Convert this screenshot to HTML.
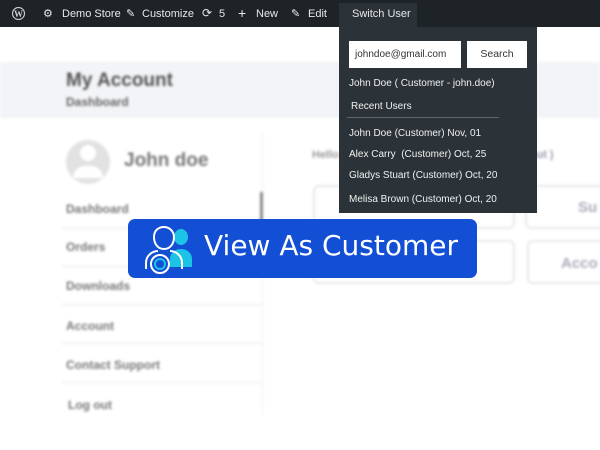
<!DOCTYPE html>
<html><head><style>
*{margin:0;padding:0;box-sizing:border-box}
body{width:600px;height:450px;overflow:hidden;background:#fff;font-family:"Liberation Sans",sans-serif;position:relative}
.bar{position:absolute;left:0;top:0;width:600px;height:27px;background:#1d2327;color:#e8e8e8;font-size:11px}
.bar span{position:absolute;top:8px;white-space:nowrap}
.blur{filter:blur(1.3px)}
.bg{position:absolute;left:0;top:0;width:600px;height:450px}
.hd{position:absolute;left:0;top:62px;width:600px;height:56px;background:#f3f4f7}
.t{position:absolute;color:#555;font-weight:bold;white-space:nowrap}
.sep{position:absolute;left:62px;width:200px;height:1px;background:#e6e6e6}
.box{position:absolute;border:2px solid #e8e8ee;border-radius:6px}
.dd{position:absolute;left:339px;top:27px;width:198px;height:186px;background:#2c3338;color:#f0f0f0;font-size:10px}
.dd div{position:absolute;white-space:nowrap}
.btn{position:absolute;left:128px;top:219px;width:349px;height:59px;background:#134fd5;border-radius:7px;color:#fff;font-size:28px;font-family:"DejaVu Sans",sans-serif}
</style></head><body>
<div class="bg blur">
 <div class="hd"></div>
 <div class="t" style="left:66px;top:70px;font-size:19px;color:#555">My Account</div>
 <div class="t" style="left:66px;top:95px;font-size:12px;color:#666">Dashboard</div>
 <div style="position:absolute;left:66px;top:140px;width:44px;height:44px;border-radius:50%;background:#e2e2e2"></div>
 <div style="position:absolute;left:80px;top:145px;width:16px;height:16px;border-radius:50%;background:#fff"></div>
 <div style="position:absolute;left:73px;top:166px;width:30px;height:12px;border-radius:12px 12px 0 0;background:#fff"></div>
 <div class="t" style="left:124px;top:150px;font-size:19px;color:#777">John doe</div>
 <div style="position:absolute;left:262px;top:132px;width:1px;height:283px;background:#eee"></div>
 <div style="position:absolute;left:260px;top:192px;width:3px;height:30px;background:#888"></div>
 <div class="t" style="left:66px;top:202px;font-size:12px;color:#777">Dashboard</div>
 <div class="sep" style="top:228px"></div>
 <div class="t" style="left:66px;top:240px;font-size:12px;color:#777">Orders</div>
 <div class="sep" style="top:266px"></div>
 <div class="t" style="left:66px;top:279px;font-size:12px;color:#777">Downloads</div>
 <div class="sep" style="top:304px"></div>
 <div class="t" style="left:66px;top:319px;font-size:12px;color:#777">Account</div>
 <div class="sep" style="top:343px"></div>
 <div class="t" style="left:66px;top:358px;font-size:12px;color:#777">Contact Support</div>
 <div class="sep" style="top:382px"></div>
 <div class="t" style="left:68px;top:398px;font-size:12px;color:#777">Log out</div>
 <div class="t" style="left:312px;top:149px;font-size:11px;color:#999">Hello</div>
 <div class="t" style="left:520px;top:149px;font-size:11px;color:#99a">g out )</div>
 <div class="box" style="left:313px;top:185px;width:202px;height:44px"></div>
 <div class="box" style="left:525px;top:185px;width:90px;height:44px"></div>
 <div class="box" style="left:313px;top:240px;width:202px;height:44px"></div>
 <div class="box" style="left:527px;top:240px;width:90px;height:44px"></div>
 <div class="t" style="left:578px;top:199px;font-size:15px;color:#aab">Su</div>
 <div class="t" style="left:561px;top:255px;font-size:15px;color:#aab">Acco</div>
</div>
<div class="bar">
 <svg style="position:absolute;left:12px;top:7px" width="13" height="13" viewBox="0 0 13 13"><circle cx="6.5" cy="6.5" r="6" fill="none" stroke="#ccc" stroke-width="1.2"/><text x="6.5" y="10" font-size="9" font-weight="bold" fill="#ccc" text-anchor="middle" font-family="Liberation Serif">W</text></svg>
 <span style="left:43px;top:7px">⚙</span><span style="left:62px">Demo Store</span>
 <span style="left:126px;top:7px">✎</span><span style="left:142px">Customize</span>
 <span style="left:202px;top:6px;font-size:12px">⟳</span><span style="left:219px">5</span>
 <span style="left:238px;top:5px;font-size:14px">+</span><span style="left:256px">New</span>
 <span style="left:291px;top:7px">✎</span><span style="left:308px">Edit</span>
 <div style="position:absolute;left:339px;top:3px;width:78px;height:24px;background:#2c3338"></div>
 <span style="left:352px">Switch User</span>
</div>
<div class="dd">
 <div style="left:10px;top:14px;width:112px;height:27px;background:#fff;color:#333;padding:8px 6px">johndoe@gmail.com</div>
 <div style="left:128px;top:14px;width:60px;height:27px;background:#fff;color:#333;padding:7px 0;text-align:center;font-size:10.5px">Search</div>
 <div style="left:10px;top:51px">John Doe ( Customer - john.doe)</div>
 <div style="left:12px;top:74px">Recent Users</div>
 <div style="left:8px;top:90px;width:152px;height:1px;background:#666"></div>
 <div style="left:10px;top:101px">John Doe (Customer) Nov, 01</div>
 <div style="left:10px;top:122px">Alex Carry&nbsp; (Customer) Oct, 25</div>
 <div style="left:10px;top:143px">Gladys Stuart (Customer) Oct, 20</div>
 <div style="left:10px;top:167px">Melisa Brown (Customer) Oct, 20</div>
</div>
<div class="btn">
 <svg style="position:absolute;left:12px;top:4px" width="56" height="52" viewBox="0 0 56 52">
  <path d="M34 14a7 8 0 1 1 14 0a7 8 0 1 1-14 0zM30 44v-8c0-6 5-10 11-10s11 4 11 10v8z" fill="#1dc3e6"/>
  <path d="M14 14c0-7 5-10 10-10s10 4 10 10c0 7-4 12-10 12s-10-5-10-12z" fill="#134fd5" stroke="#fff" stroke-width="2"/>
  <path d="M6 46v-6c0-8 7-12 12-12M30 28c5 0 12 4 12 12v6" fill="none" stroke="#fff" stroke-width="2"/>
  <circle cx="20" cy="41" r="9" fill="#134fd5" stroke="#fff" stroke-width="2"/>
  <circle cx="20" cy="41" r="5" fill="none" stroke="#1dc3e6" stroke-width="2"/>
 </svg>
 <div style="position:absolute;left:76px;top:10px;white-space:nowrap">View As Customer</div>
</div>
</body></html>
